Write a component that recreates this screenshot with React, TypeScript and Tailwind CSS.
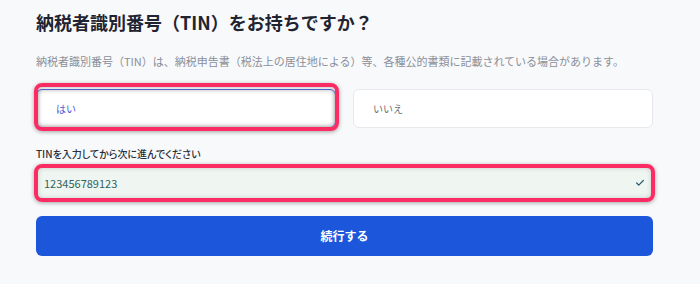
import { Check } from "lucide-react";

const font = { fontFamily: '"Noto Sans CJK JP", "Noto Sans", sans-serif' };

export default function App() {
  return (
    <div className="min-h-screen w-full bg-[#f8f9fb]" style={font}>
      <div className="px-[36px] pt-[8px] w-[689px]">
        {/* Heading */}
        <h1 className="text-[18px] leading-[28px] font-bold text-[#1f2430]">
          納税者識別番号（TIN）をお持ちですか？
        </h1>
        <p className="mt-[17px] text-[11px] leading-[16px] text-[#8a8f99] whitespace-nowrap">
          納税者識別番号（TIN）は、納税申告書（税法上の居住地による）等、各種公的書類に記載されている場合があります。
        </p>

        {/* Yes / No choice */}
        <div className="mt-[20px] grid grid-cols-2 gap-[17px]">
          <div className="relative">
            <button className="w-full h-[39px] rounded-md bg-white border border-[#4f63d2] shadow-[inset_0_0_5px_rgba(0,0,0,0.25)] text-left pl-[19px] text-[10px] text-[#4b57dd]">
              はい
            </button>
            <div className="absolute -left-[2px] -right-[3px] -top-[6px] -bottom-[3px] rounded-lg border-4 border-[#fb2b63] shadow-[0_1px_4px_rgba(0,0,0,0.35),inset_0_0_4px_rgba(0,0,0,0.3)] pointer-events-none" />
          </div>
          <button className="w-full h-[39px] rounded-md bg-white border border-[#e6e8ec] text-left pl-[19px] text-[10px] text-[#6b6f76]">
            いいえ
          </button>
        </div>

        {/* TIN input */}
        <label className="block mt-[19px] text-[10px] leading-[14px] font-medium text-[#2a2e36] [font-feature-settings:'palt']">
          TINを入力してから次に進んでください
        </label>
        <div className="relative mt-[5px]">
          <div className="h-[34px] rounded-md bg-[#eff6f2] shadow-[inset_0_0_6px_rgba(0,0,0,0.3)] flex items-center justify-between pl-[8px] pr-[8px]">
            <span className="text-[11px] text-[#2f625e]">123456789123</span>
            <Check className="w-[10px] h-[10px] text-[#2b5b6b]" strokeWidth={3} />
          </div>
          <div className="absolute -inset-[2px] rounded-lg border-4 border-[#fb2b63] shadow-[0_1px_4px_rgba(0,0,0,0.35)] pointer-events-none" />
        </div>

        {/* Continue */}
        <button className="mt-[16px] w-full h-[40px] rounded-md bg-[#1c57db] text-white text-[12px] font-bold">
          続行する
        </button>
      </div>
    </div>
  );
}
